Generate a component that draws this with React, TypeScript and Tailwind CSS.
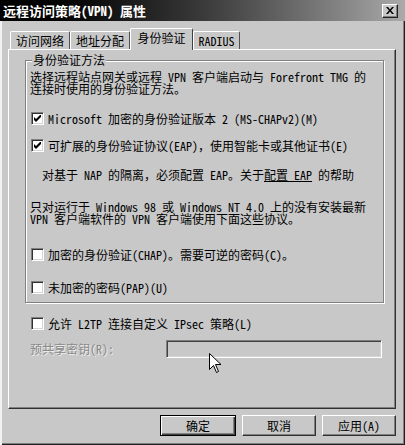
import React from "react";

function Check({ checked }: { checked?: boolean }) {
  return (
    <span className="w-[13px] h-[13px] shrink-0 bg-white border border-t-[#808080] border-l-[#808080] border-b-white border-r-white shadow-[inset_1px_1px_0_#303030,inset_-1px_-1px_0_#d4d4d4] flex items-center justify-center">
      {checked && (
        <svg width="7" height="7" viewBox="0 0 7 7" className="block">
          <path d="M0 2 L2 4 L6 0 L7 0 L7 2 L2 7 L0 5 Z" fill="#000" />
        </svg>
      )}
    </span>
  );
}

function Tab({ label, active, w }: { label: string; active?: boolean; w: string }) {
  if (active) {
    return (
      <div
        className={`${w} h-[22px] -mb-px relative z-10 bg-[#c8c8c8] border-t border-l border-r border-t-white border-l-white border-r-[#404040] rounded-t-[2px] flex items-start justify-center pt-[3px] text-[12px] leading-[12px] text-black`}
      >
        {label}
      </div>
    );
  }
  return (
    <div
      className={`${w} h-[18px] border-t border-l border-r border-t-white border-l-white border-r-[#505050] rounded-t-[2px] flex items-center justify-center text-[12px] leading-[12px] text-black`}
    >
      {label}
    </div>
  );
}

function Btn({ label, primary }: { label: string; primary?: boolean }) {
  return (
    <div
      className={
        primary
          ? "w-[76px] h-[21px] border border-black shadow-[inset_1px_1px_0_#fff,inset_-1px_-1px_0_#404040,inset_-2px_-2px_0_#808080] flex items-center justify-center text-[12px] leading-[12px] text-black"
          : "w-[74px] h-[21px] border border-t-white border-l-white border-r-[#303030] border-b-[#303030] shadow-[inset_-1px_-1px_0_#808080] flex items-center justify-center text-[12px] leading-[12px] text-black"
      }
    >
      {label}
    </div>
  );
}

export default function App() {
  return (
    <div className="relative w-[405px] h-[445px] bg-[#c8c8c8] overflow-hidden flex flex-col [font-family:'Noto_Sans_Mono_CJK_SC','Noto_Sans_CJK_SC','Liberation_Mono',monospace] text-black shadow-[inset_2px_0_0_#f2f2f2,inset_-1px_-1px_0_#202020,inset_-2px_-2px_0_#808080]">
      {/* title bar */}
      <div className="h-[21px] shrink-0 bg-linear-to-r from-[#000000] via-[#3a3a3a] to-[#aaaaaa] flex items-center justify-between pl-[3px] pr-[7px]">
        <span className="text-white font-bold text-[13px] leading-[14px]">远程访问策略(VPN) 属性</span>
        <span className="w-[16px] h-[14px] bg-[#c8c8c8] border border-t-white border-l-white border-r-[#202020] border-b-[#202020] shadow-[inset_-1px_-1px_0_#808080] flex items-center justify-center">
          <svg width="8" height="7" viewBox="0 0 8 7">
            <path d="M0 0 L2 0 L4 2.5 L6 0 L8 0 L5 3.5 L8 7 L6 7 L4 4.5 L2 7 L0 7 L3 3.5 Z" fill="#000" />
          </svg>
        </span>
      </div>

      <div className="flex flex-col pl-[8px] pr-[9px] pt-[7px]">
        {/* tabs */}
        <div className="h-[21px] flex items-end pl-[2px]">
          <Tab label="访问网络" w="w-[60px]" />
          <Tab label="地址分配" w="w-[60px]" />
          <Tab label="身份验证" w="w-[63px]" active />
          <Tab label="RADIUS" w="w-[47px]" />
        </div>

        {/* panel */}
        <div className="h-[360px] border border-t-white border-l-white border-r-[#303030] border-b-[#303030] shadow-[inset_-1px_-1px_0_#808080] flex flex-col pt-[4px]">
          <fieldset className="ml-[16px] w-[359px] border border-[#808080] shadow-[inset_1px_1px_0_#fff,1px_1px_0_#fff] pb-[8px]">
            <legend className="ml-[6px] px-[1px] bg-[#c8c8c8] text-[12px] leading-[12px]">身份验证方法</legend>
            <div className="ml-[4px] mt-[5px] flex flex-col text-[12px] leading-[12px]">
              <div className="h-[12px] whitespace-nowrap">选择远程站点网关或远程 VPN 客户端启动与 Forefront TMG 的</div>
              <div className="h-[12px] whitespace-nowrap">连接时使用的身份验证方法。</div>
            </div>
            <div className="ml-[5px] mt-[17px] h-[13px] flex items-center gap-[4px] text-[12px] leading-[12px]">
              <Check checked />
              <span>Microsoft 加密的身份验证版本 2 (MS-CHAPv2)(M)</span>
            </div>
            <div className="ml-[5px] mt-[14px] h-[13px] flex items-center gap-[4px] text-[12px] leading-[12px]">
              <Check checked />
              <span>可扩展的身份验证协议(EAP)，使用智能卡或其他证书(E)</span>
            </div>
            <div className="ml-[16px] mt-[17px] text-[12px] leading-[12px]">
              对基于 NAP 的隔离，必须配置 EAP。关于<span className="underline">配置 EAP</span> 的帮助
            </div>
            <div className="ml-[4px] mt-[20px] flex flex-col text-[12px] leading-[12px]">
              <div className="h-[12px] whitespace-nowrap">只对运行于 Windows 98 或 Windows NT 4.0 上的没有安装最新</div>
              <div className="h-[12px] whitespace-nowrap">VPN 客户端软件的 VPN 客户端使用下面这些协议。</div>
            </div>
            <div className="ml-[5px] mt-[23px] h-[13px] flex items-center gap-[4px] text-[12px] leading-[12px]">
              <Check />
              <span>加密的身份验证(CHAP)。需要可逆的密码(C)。</span>
            </div>
            <div className="ml-[5px] mt-[20px] h-[13px] flex items-center gap-[4px] text-[12px] leading-[12px]">
              <Check />
              <span>未加密的密码(PAP)(U)</span>
            </div>
          </fieldset>

          <div className="ml-[22px] mt-[14px] h-[13px] flex items-center gap-[4px] text-[12px] leading-[12px]">
            <Check />
            <span>允许 L2TP 连接自定义 IPsec 策略(L)</span>
          </div>
          <div className="ml-[21px] mt-[10px] h-[18px] flex items-center text-[12px] leading-[12px]">
            <span className="w-[136px] text-[#8a8a8a] [text-shadow:1px_1px_0_#eeeeee]">预共享密钥(R):</span>
            <span className="w-[216px] h-[18px] border border-t-[#808080] border-l-[#808080] border-b-white border-r-white shadow-[inset_1px_1px_0_#404040,inset_-1px_-1px_0_#d4d4d4] bg-[#c8c8c8]" />
          </div>
        </div>

        {/* buttons */}
        <div className="mt-[6px] flex justify-end gap-[6px]">
          <Btn label="确定" primary />
          <Btn label="取消" />
          <Btn label="应用(A)" />
        </div>
      </div>

      {/* mouse cursor */}
      <svg className="absolute left-[209px] top-[353px]" width="13" height="21" viewBox="0 0 13 21">
        <path d="M0.5 0.5 L0.5 16.5 L4.5 12.5 L7.5 19.5 L9.5 18.5 L6.5 11.5 L12 11.5 Z" fill="#fff" stroke="#000" strokeWidth="1" />
      </svg>
    </div>
  );
}
